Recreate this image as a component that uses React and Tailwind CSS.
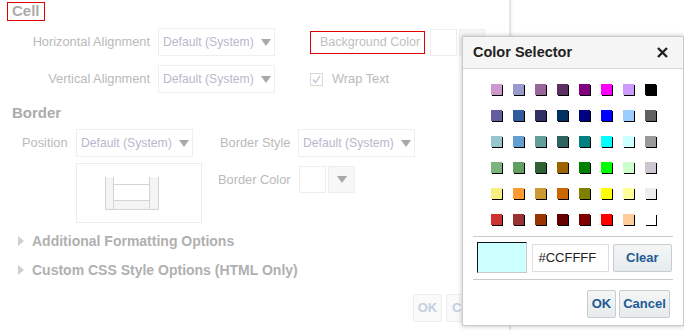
import React from 'react';

const palette = [
  ['#CC99CC', '#9999CC', '#996699', '#5C3062', '#800080', '#FF00FF', '#CC99FF', '#000000'],
  ['#635C9E', '#315B9D', '#303062', '#013060', '#000080', '#0000FF', '#99CCFF', '#606060'],
  ['#99C6CE', '#639ECF', '#629E9C', '#2F6360', '#008080', '#00FFFF', '#CCFFFF', '#999999'],
  ['#7DB47D', '#619E62', '#2F6232', '#9B6400', '#008000', '#00FF00', '#CCFFCC', '#CBC6D0'],
  ['#F7EF7F', '#FF9933', '#CC9933', '#CC6600', '#808000', '#FFFF00', '#FFFF99', '#EEEEEE'],
  ['#CC3333', '#993333', '#993300', '#660000', '#800000', '#FF0000', '#FFCC99', '#FFFFFF'],
];

const Caret = ({ className = '' }) => (
  <svg width="10" height="7" viewBox="0 0 10 7" className={className}>
    <path d="M0 0 H10 L5 7 Z" fill="#a8a8a8" />
  </svg>
);

const FadedSelect = ({ width }) => (
  <div
    className="h-[28px] border border-[#efefef] flex items-center justify-between pl-[4px] pr-[3px] text-[12.2px] text-[#bcb6cc]"
    style={{ width }}
  >
    <span>Default (System)</span>
    <Caret />
  </div>
);

const Disclosure = ({ label }) => (
  <div className="flex items-center h-[20px]">
    <svg width="6" height="10" viewBox="0 0 6 10" className="ml-[18px] mr-[8px]">
      <path d="M0 0 L6 5 L0 10 Z" fill="#cfcfcf" />
    </svg>
    <span className="text-[14px] font-bold text-[#b0b0b0]">{label}</span>
  </div>
);

const BorderPreview = () => (
  <svg width="55" height="33" viewBox="0 0 55 33">
    <rect x="0.5" y="0.5" width="53" height="32" fill="#f4f4f4" />
    <rect x="8.5" y="0" width="36" height="7" fill="#ffffff" />
    <rect x="8.5" y="7.5" width="36" height="16" fill="#ffffff" />
    <path d="M0.5 0 V32.5 H54 M8.5 0 V32.5 M44.5 0 V32.5 M53.5 0 V32.5 M8.5 7.5 H44.5 M8.5 23.5 H44.5" stroke="#d4d4d4" fill="none" />
  </svg>
);

const ColorSelector = () => (
  <div className="absolute left-[462px] top-[36px] w-[222px] h-[290px] bg-white border border-[#c9c9cf] shadow-[0_0_5px_rgba(0,0,0,0.25)] flex flex-col">
    <div className="h-[32px] bg-[#f5f5f5] border-b border-[#d4d4dc] flex items-center justify-between pl-[10px] pr-[15px]">
      <span className="text-[14.5px] font-bold text-[#222]">Color Selector</span>
      <svg width="11" height="11" viewBox="0 0 11 11">
        <path d="M1 1 L10 10 M10 1 L1 10" stroke="#222" strokeWidth="2.4" />
      </svg>
    </div>
    <div className="pt-[15px] pl-[28px] grid grid-cols-[repeat(8,11px)] gap-x-[11px] gap-y-[15px]">
      {palette.flat().map((c, i) => (
        <div
          key={i}
          className="w-[11px] h-[11px] shadow-[1px_1px_0_#000]"
          style={{ backgroundColor: c }}
        />
      ))}
    </div>
    <div className="mx-[10px] mt-[11px] border-t border-[#ccc]" />
    <div className="flex items-center pl-[14px] pr-[11px] pt-[5px] pb-[6px] gap-[4px]">
      <div className="w-[51px] h-[31px] bg-[#ccffff] border border-[#c8c8d0] border-l-[#111] border-t-[#111]" />
      <div className="ml-[1px] w-[77px] h-[28px] border border-[#dedede] flex items-center pl-[5px] text-[13px] text-[#222]">
        #CCFFFF
      </div>
      <div className="w-[60px] h-[28px] border border-[#c5cdd2] rounded-[2px] bg-gradient-to-b from-[#f4f6f6] to-[#e6ebeb] flex items-center justify-center text-[13px] font-bold text-[#1f5a94]">
        Clear
      </div>
    </div>
    <div className="mx-[10px] border-t border-[#ccc]" />
    <div className="flex justify-end gap-[3px] pr-[13px] pt-[10px]">
      <div className="w-[29px] h-[28px] border border-[#c5cdd2] rounded-[2px] bg-gradient-to-b from-[#f4f6f6] to-[#e6ebeb] flex items-center justify-center text-[13px] font-bold text-[#1f5a94]">
        OK
      </div>
      <div className="w-[51px] h-[28px] border border-[#c5cdd2] rounded-[2px] bg-gradient-to-b from-[#f4f6f6] to-[#e6ebeb] flex items-center justify-center text-[13px] font-bold text-[#1f5a94]">
        Cancel
      </div>
    </div>
  </div>
);

export default function App() {
  return (
    <div
      className="relative w-[684px] h-[330px] overflow-hidden bg-white whitespace-nowrap"
      style={{ fontFamily: '"Liberation Sans", Arial, sans-serif' }}
    >
      <div className="w-[511px] h-full border-r-[2px] border-[#e6e6e6] shadow-[1px_0_3px_rgba(0,0,0,0.06)]">
        {/* Cell */}
        <div className="pt-[2px] pl-[7px] flex">
          <div className="flex items-center h-[19px] border border-[#e00000] px-[4px] text-[15px] font-bold text-[#ababab]">
            Cell
          </div>
        </div>

        <div className="mt-[7px] flex items-center">
          <div className="w-[150px] text-right text-[12.8px] text-[#bababa]">Horizontal Alignment</div>
          <div className="ml-[8px]"><FadedSelect width={117} /></div>
          <div className="ml-[35px] w-[115px] h-[23px] border border-[#e00000] flex items-center pl-[9px] text-[12.5px] text-[#c0c0c0]">
            Background Color
          </div>
          <div className="ml-[5px] w-[27px] h-[27px] border border-[#eeeeee]" />
          <div className="ml-[2px] w-[26px] h-[27px] border border-[#eeeeee] bg-[#f7f7f7]" />
        </div>

        <div className="mt-[9px] flex items-center">
          <div className="w-[150px] text-right text-[12.8px] text-[#bababa]">Vertical Alignment</div>
          <div className="ml-[8px]"><FadedSelect width={117} /></div>
          <div className="ml-[35px] w-[13px] h-[13px] border border-[#d8d8d8] flex items-center justify-center">
            <svg width="9" height="9" viewBox="0 0 9 9">
              <path d="M1 4.5 L3.5 7.5 L8 1" stroke="#b8c4d8" strokeWidth="1.3" fill="none" />
            </svg>
          </div>
          <span className="ml-[9px] text-[12.8px] text-[#bababa]">Wrap Text</span>
        </div>

        {/* Border */}
        <div className="mt-[9px] pl-[12px] text-[15px] font-bold text-[#ababab] leading-[22px]">Border</div>

        <div className="mt-[5px] flex items-center">
          <div className="pl-[22px] w-[76px] text-[12.8px] text-[#bababa]">Position</div>
          <FadedSelect width={117} />
          <div className="ml-[27px] w-[78px] text-[12.8px] text-[#bababa]">Border Style</div>
          <FadedSelect width={117} />
        </div>

        <div className="mt-[6px] flex items-start">
          <div className="ml-[76px] w-[126px] h-[60px] border border-[#ececec] flex items-center justify-center pr-[14px]">
            <BorderPreview />
          </div>
          <div className="ml-[16px] mt-[3px] flex items-center">
            <div className="w-[81px] text-[12.8px] text-[#bababa]">Border Color</div>
            <div className="w-[27px] h-[27px] border border-[#eeeeee]" />
            <div className="ml-[2px] w-[27px] h-[27px] border border-[#eeeeee] bg-[#f7f7f7] flex items-center justify-center">
              <Caret />
            </div>
          </div>
        </div>

        <div className="mt-[8px]">
          <Disclosure label="Additional Formatting Options" />
        </div>
        <div className="mt-[9px]">
          <Disclosure label="Custom CSS Style Options (HTML Only)" />
        </div>

        <div className="mt-[14px] flex pl-[413px] gap-[4px]">
          <div className="w-[29px] h-[28px] border border-[#eeeeee] rounded-[2px] bg-[#fafafa] flex items-center justify-center text-[13px] font-bold text-[#c2d0e0]">
            OK
          </div>
          <div className="w-[51px] h-[28px] border border-[#eeeeee] rounded-[2px] bg-[#fafafa] flex items-center pl-[5px] text-[13px] font-bold text-[#c2d0e0]">
            Cancel
          </div>
        </div>
      </div>

      <ColorSelector />
    </div>
  );
}
